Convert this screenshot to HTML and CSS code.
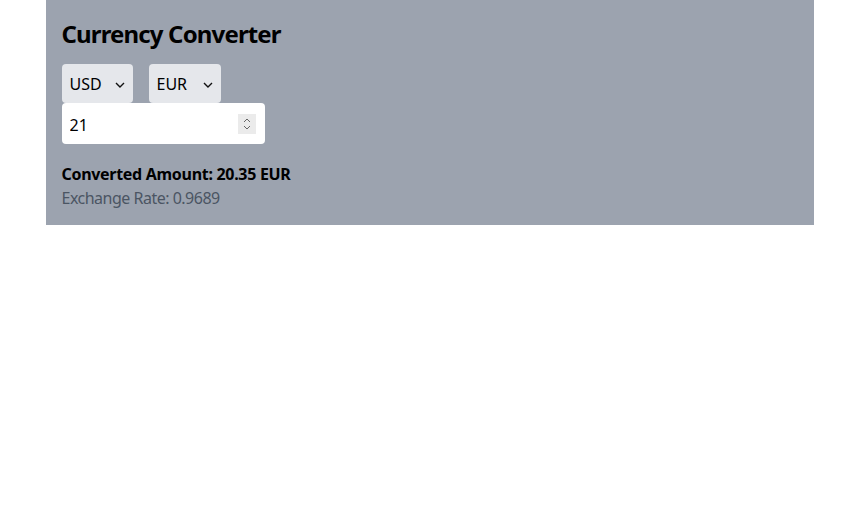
FILE: index.html
```html
<!DOCTYPE html>
<html lang="en">
<head>
<meta charset="utf-8">
<title>Currency Converter</title>
<link rel="stylesheet" href="styles.css">
</head>
<body>
<div class="panel">
  <h1 class="title">Currency Converter</h1>
  <div class="selects">
    <div class="select-wrap">
      <select class="select"><option>USD</option><option>EUR</option></select>
      <svg class="chev" width="10" height="6" viewBox="0 0 10 6"><path d="M1 1l4 4 4-4" fill="none" stroke="#111" stroke-width="1.4"/></svg>
    </div>
    <div class="select-wrap">
      <select class="select"><option>EUR</option><option>USD</option></select>
      <svg class="chev" width="10" height="6" viewBox="0 0 10 6"><path d="M1 1l4 4 4-4" fill="none" stroke="#111" stroke-width="1.4"/></svg>
    </div>
  </div>
  <div class="input-wrap">
    <input class="amount" type="number" value="21">
    <span class="spin">
      <svg width="8" height="16" viewBox="0 0 8 16"><path d="M1 6l3-3 3 3M1 10l3 3 3-3" fill="none" stroke="#666" stroke-width="1"/></svg>
    </span>
  </div>
  <p class="result">Converted Amount: 20.35 EUR</p>
  <p class="rate">Exchange Rate: 0.9689</p>
</div>
</body>
</html>
```

FILE: styles.css
```css
* { box-sizing: border-box; }
body {
  margin: 0;
  background: #ffffff;
  font-family: "Noto Sans", "Open Sans", sans-serif;
  color: #000;
}
.panel {
  width: 768px;
  margin: 0 auto;
  background: #9ca3af;
  padding: 16px 16px 15px;
}
.title {
  margin: 0 0 14px;
  padding-top: 2px;
  font-size: 24px;
  line-height: 32px;
  font-weight: 700;
  letter-spacing: -0.85px;
}
.selects {
  display: flex;
  gap: 16px;
}
.select-wrap {
  position: relative;
  display: inline-block;
}
.select {
  appearance: none;
  -webkit-appearance: none;
  border: none;
  border-radius: 4px;
  background: #e5e7eb;
  font-family: inherit;
  font-size: 16px;
  line-height: 22px;
  height: 39px;
  padding: 9px 30px 8px 8px;
  color: #000;
  width: 71px;
}
.select-wrap:nth-child(2) .select { width: 72px; }
.chev {
  position: absolute;
  right: 8px;
  top: 18px;
  pointer-events: none;
}
.input-wrap {
  position: relative;
  width: 203px;
}
.amount {
  display: block;
  width: 100%;
  height: 41px;
  border: none;
  border-radius: 4px;
  background: #fff;
  font-family: inherit;
  font-size: 16px;
  padding: 10px 8px 7px;
  color: #000;
  -moz-appearance: textfield;
}
.amount::-webkit-inner-spin-button,
.amount::-webkit-outer-spin-button {
  -webkit-appearance: none;
  margin: 0;
}
.spin {
  position: absolute;
  right: 9px;
  top: 11px;
  width: 18px;
  height: 20px;
  background: #ebebeb;
  display: flex;
  align-items: center;
  justify-content: center;
}
.result {
  margin: 18px 0 0;
  font-size: 16px;
  line-height: 24px;
  font-weight: 700;
  letter-spacing: -0.3px;
}
.rate {
  margin: 0;
  font-size: 16px;
  line-height: 24px;
  color: #4b5563;
  letter-spacing: -0.5px;
}
```
